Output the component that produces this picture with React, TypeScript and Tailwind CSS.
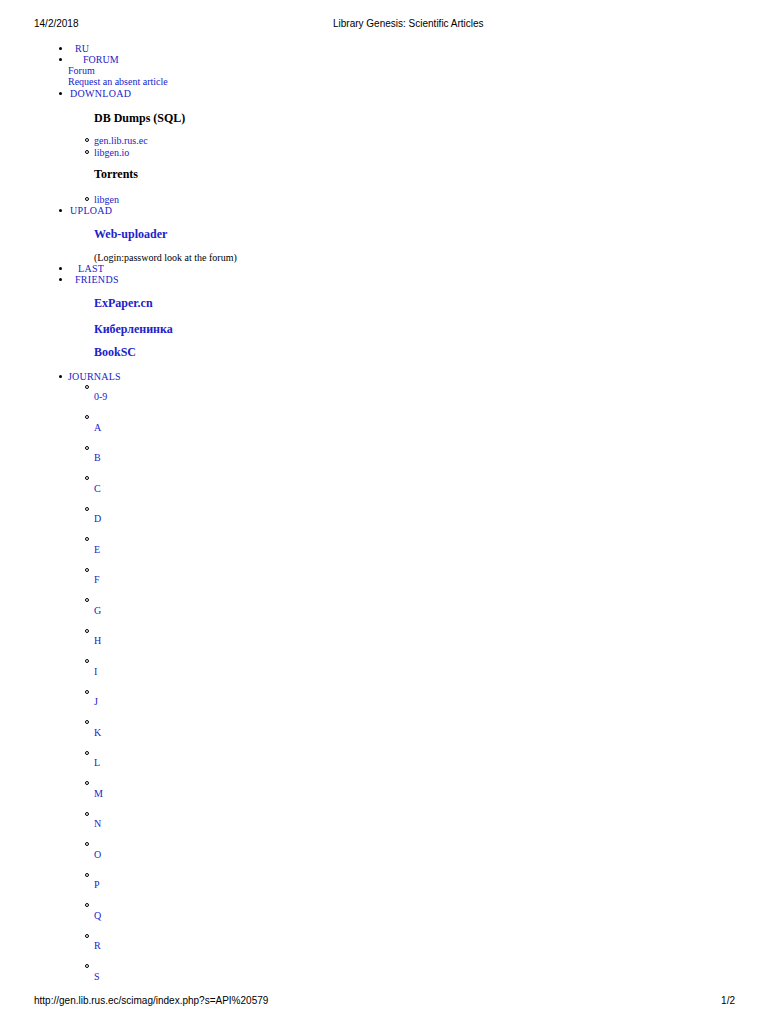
const blue = 'text-[#2121c9]'

const journals = ['0-9', 'A', 'B', 'C', 'D', 'E', 'F', 'G', 'H', 'I', 'J', 'K', 'L', 'M', 'N', 'O', 'P', 'Q', 'R', 'S']

function Dot() {
  return <span className="w-[3px] h-[3px] rounded-full bg-black inline-block" />
}

function Circle() {
  return <span className="w-[4px] h-[4px] rounded-full border border-black inline-block" />
}

function Main({ indent, children }: { indent: string; children: React.ReactNode }) {
  return (
    <div className="flex items-center h-[11px] pl-[59px]">
      <Dot />
      <span className={`${indent} ${blue}`}>{children}</span>
    </div>
  )
}

function Sub({ children }: { children: React.ReactNode }) {
  return (
    <div className="flex items-center h-[12px] pl-[85px]">
      <Circle />
      <span className={`ml-[5px] ${blue}`}>{children}</span>
    </div>
  )
}

function Heading({ link, children, className = '' }: { link?: boolean; children: React.ReactNode; className?: string }) {
  return (
    <div className={`pl-[94px] h-[14px] flex items-center text-[12px] font-bold ${link ? blue : 'text-black'} ${className}`}>
      {children}
    </div>
  )
}

export default function App() {
  return (
    <div className="w-[768px] h-[1024px] overflow-hidden bg-white text-black font-['Liberation_Serif',serif] text-[10px] leading-[11px]">
      <header className="flex pt-[18px] pl-[34px] h-[43px] font-['Liberation_Sans',Arial,sans-serif] text-[10px]">
        <span className="w-[299px]">14/2/2018</span>
        <span>Library Genesis: Scientific Articles</span>
      </header>

      <Main indent="ml-[13px]">RU</Main>
      <Main indent="ml-[21px]">FORUM</Main>
      <div className={`pl-[68px] h-[11px] ${blue}`}>Forum</div>
      <div className={`pl-[68px] h-[11px] ${blue}`}>Request an absent article</div>
      <div className="mt-[1px]">
        <Main indent="ml-[8px] tracking-[0.3px]">DOWNLOAD</Main>
      </div>

      <Heading className="mt-[12px]">DB Dumps (SQL)</Heading>
      <div className="mt-[9px]">
        <Sub>gen.lib.rus.ec</Sub>
        <Sub>libgen.io</Sub>
      </div>
      <Heading className="mt-[9px]">Torrents</Heading>
      <div className="mt-[12px]">
        <Sub>libgen</Sub>
      </div>
      <Main indent="ml-[8px] tracking-[0.3px]">UPLOAD</Main>

      <Heading link className="mt-[11px]">Web-uploader</Heading>
      <div className="pl-[94px] h-[11px] mt-[11px]">(Login:password look at the forum)</div>
      <Main indent="ml-[16px] tracking-[0.3px]">LAST</Main>
      <Main indent="ml-[13px] tracking-[0.3px]">FRIENDS</Main>

      <Heading link className="mt-[11px]">ExPaper.cn</Heading>
      <Heading link className="mt-[12px]">Киберленинка</Heading>
      <Heading link className="mt-[9px]">BookSC</Heading>

      <div className="mt-[12px]">
        <Main indent="ml-[6px] tracking-[0.2px]">JOURNALS</Main>
      </div>
      <div>
        {journals.map((j) => (
          <div key={j} className="h-[30.5px] pl-[85px]">
            <div className="h-[9px] flex items-center">
              <Circle />
            </div>
            <div className={`h-[11px] pl-[9px] ${blue}`}>{j}</div>
          </div>
        ))}
      </div>

      <footer className="flex justify-between pl-[34px] pr-[33px] mt-[3px] font-['Liberation_Sans',Arial,sans-serif] text-[10px]">
        <span>http://gen.lib.rus.ec/scimag/index.php?s=API%20579</span>
        <span>1/2</span>
      </footer>
    </div>
  )
}
